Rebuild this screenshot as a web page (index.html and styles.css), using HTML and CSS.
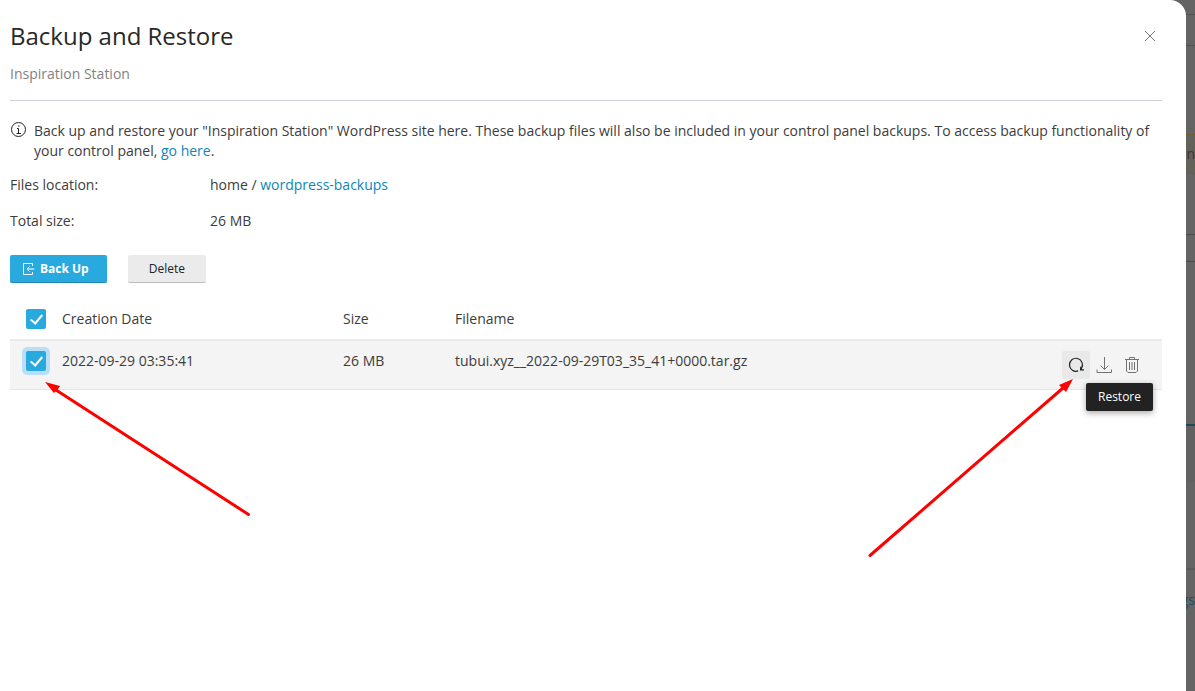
FILE: index.html
```html
<!DOCTYPE html>
<html lang="en">
<head>
<meta charset="utf-8">
<title>Backup and Restore</title>
<link rel="stylesheet" href="styles.css">
</head>
<body>
<div class="page" aria-hidden="true">
  <div class="strip strip-top"></div>
  <div class="strip strip-nav"></div>
  <div class="strip strip-head"></div>
  <div class="notice"><span>n</span></div>
  <div class="strip strip-gap"></div>
  <div class="strip strip-row"></div>
  <div class="strip strip-tabs"></div>
  <div class="strip strip-body"></div>
  <div class="strip strip-card"></div>
  <div class="page-link"><span>gs</span></div>
</div>

<main class="drawer">
  <header class="drawer-head">
    <div>
      <h1 class="title">Backup and Restore</h1>
      <p class="subtitle">Inspiration Station</p>
    </div>
    <button class="close" type="button" aria-label="Close">
      <svg width="12" height="12" viewBox="0 0 12 12"><path d="M1 1L11 11M11 1L1 11"/></svg>
    </button>
  </header>

  <div class="info">
    <svg class="info-icon" width="17" height="17" viewBox="0 0 17 17"><circle cx="8.500" cy="8.500" r="7"/><path d="M7 7.500H8.500V12M6.500 12.500H11M8 5H9.500"/></svg>
    <p>Back up and restore your "Inspiration Station" WordPress site here. These backup files will also be included in your control panel backups. To access backup functionality of your control panel, <a href="#">go here</a>.</p>
  </div>

  <dl class="facts">
    <dt>Files location:</dt>
    <dd>home / <a href="#">wordpress-backups</a></dd>
    <dt>Total size:</dt>
    <dd>26 MB</dd>
  </dl>

  <div class="toolbar">
    <button class="btn btn-primary" type="button">
      <svg width="12" height="12" viewBox="0 0 12 12"><path d="M9.500 3V.5H.5V11.500H9.500V9M11.500 6H4M6.500 3.500L4 6L6.500 8.500"/></svg>
      Back Up
    </button>
    <button class="btn" type="button">Delete</button>
  </div>

  <table class="backups">
    <colgroup><col class="col-check"><col class="col-date"><col class="col-size"><col><col class="col-actions"></colgroup>
    <thead>
      <tr>
        <th class="check"><input type="checkbox" checked aria-label="Select all backups"></th>
        <th>Creation Date</th>
        <th>Size</th>
        <th>Filename</th>
        <th></th>
      </tr>
    </thead>
    <tbody>
      <tr>
        <td class="check"><input class="focused" type="checkbox" checked aria-label="Select backup"></td>
        <td>2022-09-29 03:35:41</td>
        <td>26 MB</td>
        <td>tubui.xyz__2022-09-29T03_35_41+0000.tar.gz</td>
        <td class="actions">
          <div class="action-list">
            <button class="icon-btn active" type="button" aria-label="Restore backup">
              <svg width="16" height="16" viewBox="0 0 16 16"><path stroke-width="1.200" d="M10.200 13.900A6.500 6.500 0 1 1 13.500 11.200L12.500 12.800"/><path class="solid" d="M12 9V13.500H16V12.300H14Z"/></svg>
            </button>
            <button class="icon-btn" type="button" aria-label="Download">
              <svg width="16" height="16" viewBox="0 0 16 16"><path d="M8.500 0V12.500M4.500 8.500L8.500 12.500L12.500 8.500M1 12.500V15.500H15.500V12.500"/></svg>
            </button>
            <button class="icon-btn" type="button" aria-label="Remove">
              <svg width="16" height="16" viewBox="0 0 16 16"><path d="M1 2.500H15M5.500 2.500V.5H10.500V2.500M2.500 2.500V14L4 15.500H12L13.500 14V2.500M5.500 5V13M8 5V13M10.500 5V13"/></svg>
            </button>
            <span class="tooltip" role="tooltip">Restore</span>
          </div>
        </td>
      </tr>
    </tbody>
  </table>
</main>

<svg class="arrow arrow-left" width="206" height="136" viewBox="0 0 206 136" aria-hidden="true"><path class="shaft" d="M203.500 132.500L11 8"/><path class="head" d="M0 0L15 4L13 7L9 11Z"/></svg>
<svg class="arrow arrow-right" width="206" height="180" viewBox="0 0 206 180" aria-hidden="true"><path class="shaft" d="M2 176.500L195 9"/><path class="head" d="M205 0L191 6L194 9L198 13Z"/></svg>
</body>
</html>
```

FILE: styles.css
```css
* { box-sizing: border-box; }

body {
  margin: 0;
  min-height: 100vh;
  display: flex;
  position: relative;
  overflow-x: hidden;
  background: #646464;
  color: #3c3c3c;
  font: 14px/20px "Open Sans", sans-serif;
}

h1, p, dl, dd { margin: 0; }
a { color: #0c87b8; text-decoration: none; }
svg { display: block; fill: none; stroke: currentColor; }
button { font: inherit; color: inherit; border: 0; cursor: pointer; }

/* dimmed page behind the drawer */
.page {
  position: absolute;
  inset: 0;
  overflow: hidden;
  text-align: right;
}
.strip { border-bottom: 1px solid #515155; }
.strip-top { height: 15px; }
.strip-nav { height: 31px; }
.strip-head { height: 88px; border-bottom: 0; }
.notice {
  height: 40px;
  border: solid #735c33;
  border-width: 1px 0;
  background: #63625a;
  color: #3a3434;
  line-height: 38px;
}
.strip-gap { height: 61px; border-color: #4b4b4b; }
.strip-row { height: 27px; border-color: #4b4b4b; }
.strip-tabs { height: 164px; border-bottom: 2px solid #1c4858; }
.strip-body { height: 56px; background: #616161; border-bottom: 0; }
.strip-card { height: 88px; border-bottom: 2px solid #5a5a5a; }
.page-link { padding-top: 20px; color: #204f62; }

.drawer {
  flex: 1;
  min-width: 0;
  position: relative;
  margin-right: 9px;
  padding: 20px 24px 20px 10px;
  background: #fff;
  border-top-right-radius: 16px;
}

.drawer-head {
  display: flex;
  justify-content: space-between;
  align-items: flex-start;
  padding-bottom: 16px;
  border-bottom: 1px solid #d0d0dc;
}
.title {
  margin-bottom: 12px;
  font-size: 24px;
  line-height: 32px;
  font-weight: 400;
  color: #282828;
}
.subtitle { color: #828282; }
.close {
  padding: 10px 6px;
  background: none;
  color: #737373;
}

.info {
  display: flex;
  gap: 7px;
  padding: 20px 10px 0 0;
}
.info-icon { flex: none; color: #222; }

.facts {
  display: grid;
  grid-template-columns: 200px 1fr;
  row-gap: 16px;
  padding: 14px 0 24px;
}

.toolbar { display: flex; gap: 21px; padding-bottom: 16px; }
.btn {
  display: flex;
  align-items: center;
  gap: 5px;
  height: 28px;
  padding: 0 21px;
  border-bottom: 1px solid #bdbdbd;
  border-radius: 2px;
  background: #ebebeb;
  color: #222;
  font-size: 12px;
  font-weight: 500;
}
.btn-primary {
  padding: 0 18px 0 13px;
  border-color: #2089b6;
  background: #28aade;
  color: #fff;
  font-weight: 700;
}

.backups {
  width: 100%;
  table-layout: fixed;
  border-collapse: separate;
  border-spacing: 0;
}
.col-check { width: 44px; }
.col-date { width: 281px; }
.col-size { width: 112px; }
.col-actions { width: 116px; }
.backups th, .backups td {
  padding: 10px 8px;
  text-align: left;
  vertical-align: top;
  font-weight: 400;
}
.backups th { border-bottom: 2px solid #ebebeb; }
.backups td { background: #f4f4f4; border-bottom: 1px solid #e6e6e6; }
.backups .check { padding: 10px 8px 10px 16px; }
.backups .actions { padding: 10px 16px 10px 0; }

input[type="checkbox"] {
  appearance: none;
  display: grid;
  justify-items: center;
  align-items: start;
  width: 20px;
  height: 20px;
  margin: 0;
  padding-top: 3px;
  border-radius: 2px;
  background: #28aade;
}
input[type="checkbox"]:checked::before {
  content: "";
  box-sizing: border-box;
  width: 7px;
  height: 12px;
  border: solid #fff;
  border-width: 0 2px 2px 0;
  transform: rotate(40deg);
}
input.focused { box-shadow: 0 0 0 4px #b8def8; }

.action-list {
  display: flex;
  justify-content: flex-end;
  position: relative;
}
.icon-btn {
  display: grid;
  place-items: center;
  width: 28px;
  height: 28px;
  padding: 0;
  border-radius: 2px;
  background: none;
  color: #737373;
}
.icon-btn.active { background: #e9e9e9; color: #222; }
.solid { fill: currentColor; stroke: none; }

.tooltip {
  position: absolute;
  top: 32px;
  right: -7px;
  padding: 4px 12px;
  border-radius: 2px;
  background: #222;
  box-shadow: 0 2px 6px rgba(0, 0, 0, 0.35);
  color: #fff;
  font-size: 12px;
  font-weight: 500;
}

/* annotation arrows drawn over the drawer */
.arrow { position: absolute; color: #f00; pointer-events: none; }
.arrow-left { left: 45px; top: 382px; }
.arrow-right { right: 121px; top: 379px; }
.shaft { stroke-width: 3; stroke-linecap: round; }
.head { fill: currentColor; stroke: none; }
```
